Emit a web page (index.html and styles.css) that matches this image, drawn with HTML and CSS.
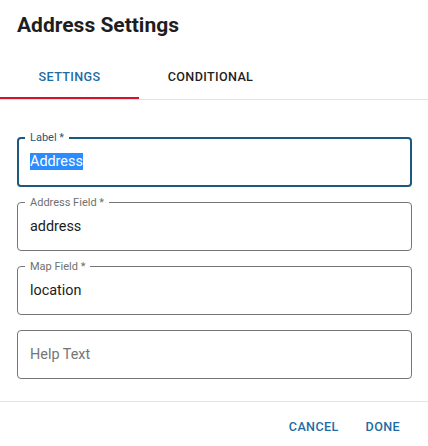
FILE: index.html
```html
<!DOCTYPE html>
<html lang="en">
<head>
<meta charset="utf-8">
<title>Address Settings</title>
<link rel="stylesheet" href="styles.css">
</head>
<body>
<div class="dialog">
  <h2 class="title">Address Settings</h2>
  <div class="tabs">
    <div class="tab tab-active tab-first">Settings</div>
    <div class="tab tab-second">Conditional</div>
  </div>
  <div class="content">
    <div class="field field-focused">
      <span class="legend">Label *</span>
      <div class="value"><span class="selected">Address</span></div>
    </div>
    <div class="field">
      <span class="legend">Address Field *</span>
      <div class="value">address</div>
    </div>
    <div class="field">
      <span class="legend">Map Field *</span>
      <div class="value">location</div>
    </div>
    <div class="field">
      <div class="value placeholder">Help Text</div>
    </div>
  </div>
  <div class="actions">
    <button class="btn">Cancel</button>
    <button class="btn">Done</button>
  </div>
</div>
</body>
</html>
```
FILE: styles.css
```css
html, body {
  margin: 0;
  padding: 0;
  background: #fff;
}
body {
  font-family: Roboto, "Liberation Sans", Arial, sans-serif;
  color: rgba(0, 0, 0, 0.87);
  width: 428px;
}
.dialog {
  width: 428px;
}
.title {
  margin: 0;
  padding: 9px 17px 0;
  height: 32px;
  font-size: 21px;
  font-weight: 700;
  line-height: 32px;
  color: #1e1e1e;
}
.tabs {
  margin-top: 10px;
  display: flex;
  border-bottom: 1px solid #e3e3e3;
}
.tab {
  height: 48px;
  box-sizing: border-box;
  padding-top: 2px;
  display: flex;
  align-items: center;
  justify-content: center;
  font-size: 12.6px;
  font-weight: 500;
  letter-spacing: 0.36px;
  text-transform: uppercase;
  color: #1f1f1f;
}
.tab-first {
  width: 139px;
}
.tab-second {
  width: 143px;
}
.tab-active {
  color: #1f6ba3;
  box-shadow: inset 0 -2px 0 #d0142d;
}
.content {
  padding: 37px 16px 22px 17px;
  border-bottom: 1px solid #e3e3e3;
}
.field {
  height: 49px;
  box-sizing: border-box;
  border: 1px solid #767676;
  border-radius: 4px;
  display: flex;
  flex-direction: column;
  justify-content: flex-start;
  margin-bottom: 15px;
}
.field:last-child {
  margin-bottom: 0;
}
.field-focused {
  height: 50px;
  border: 2px solid #1d587d;
}
.legend {
  align-self: flex-start;
  margin: -7px 0 -6px 7px;
  padding: 0 5px;
  font-size: 11px;
  line-height: 13px;
  background: #fff;
  color: #707070;
}
.field-focused .legend {
  margin-top: -8px;
  margin-left: 6px;
  color: #1d587d;
}
.value {
  margin: auto 0;
  padding-left: 12px;
  font-size: 14.4px;
  line-height: 17px;
  height: 17px;
  color: #1c1c1c;
}
.field-focused .value {
  padding-left: 11px;
}
.selected {
  background: #2a8cff;
  color: #fff;
}
.placeholder {
  color: #757575;
}
.actions {
  display: flex;
  justify-content: flex-end;
  gap: 11px;
  padding: 10px 20px 0 0;
  height: 34px;
}
.btn {
  border: 0;
  background: transparent;
  padding: 3px 8px;
  font-family: Roboto, "Liberation Sans", Arial, sans-serif;
  font-size: 12.6px;
  font-weight: 500;
  letter-spacing: 0.36px;
  line-height: 24px;
  text-transform: uppercase;
  color: #1f6ba3;
  height: 30px;
}
```
